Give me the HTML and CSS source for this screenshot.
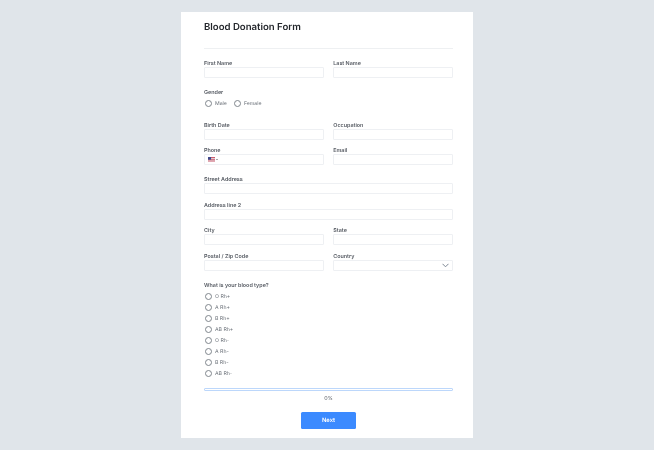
FILE: index.html
```html
<!DOCTYPE html>
<html lang="en">
<head>
  <meta charset="UTF-8" />
  <title>Blood Donation Form</title>
  <link rel="stylesheet" href="styles.css">
</head>
<body>
  <form class="card">
    <h1>Blood Donation Form</h1>

    <div class="row row-first">
      <div class="field"><label>First Name</label><div class="input"></div></div>
      <div class="field"><label>Last Name</label><div class="input"></div></div>
    </div>

    <div class="gender">
      <label>Gender</label>
      <div class="radio-inline">
        <span class="radio"><i></i>Male</span>
        <span class="radio"><i></i>Female</span>
      </div>
    </div>

    <div class="row row-birth">
      <div class="field"><label>Birth Date</label><div class="input"></div></div>
      <div class="field"><label>Occupation</label><div class="input"></div></div>
    </div>

    <div class="row row-phone">
      <div class="field">
        <label>Phone</label>
        <div class="input input-phone">
          <svg class="flag" width="7" height="4.5" viewBox="0 0 8 5">
            <rect width="8" height="5" fill="#e9e9ee"/>
            <rect width="8" height="1" fill="#c8475a"/>
            <rect y="2" width="8" height="1" fill="#c8475a"/>
            <rect y="4" width="8" height="1" fill="#c8475a"/>
            <rect width="3.5" height="3" fill="#3c4a8c"/>
          </svg>
          <span class="caret"></span>
        </div>
      </div>
      <div class="field"><label>Email</label><div class="input"></div></div>
    </div>

    <div class="field street"><label>Street Address</label><div class="input"></div></div>
    <div class="field line2"><label>Address line 2</label><div class="input"></div></div>

    <div class="row city">
      <div class="field"><label>City</label><div class="input"></div></div>
      <div class="field"><label>State</label><div class="input"></div></div>
    </div>

    <div class="row line2">
      <div class="field"><label>Postal / Zip Code</label><div class="input"></div></div>
      <div class="field">
        <label>Country</label>
        <div class="input input-select">
          <svg width="7" height="5" viewBox="0 0 7 5"><path d="M0.5 0.8 L3.5 3.8 L6.5 0.8" fill="none" stroke="#7d8794" stroke-width="1"/></svg>
        </div>
      </div>
    </div>

    <div class="blood">
      <label>What is your blood type?</label>
      <div class="radio-list">
        <span class="radio"><i></i>O Rh+</span>
        <span class="radio"><i></i>A Rh+</span>
        <span class="radio"><i></i>B Rh+</span>
        <span class="radio"><i></i>AB Rh+</span>
        <span class="radio"><i></i>O Rh-</span>
        <span class="radio"><i></i>A Rh-</span>
        <span class="radio"><i></i>B Rh-</span>
        <span class="radio"><i></i>AB Rh-</span>
      </div>
    </div>

    <div class="progress"></div>
    <div class="percent">0%</div>

    <div class="actions"><button type="button">Next</button></div>
  </form>
</body>
</html>
```

FILE: styles.css
```css
body {
  margin: 0;
  height: 450px;
  overflow: hidden;
  background-color: #e0e5ea;
  font-family: "Inter", "Liberation Sans", sans-serif;
  color: #565b63;
  text-rendering: geometricPrecision;
}

.card {
  width: 249px;
  height: 426px;
  margin: 12px 0 0 181px;
  padding: 0 20px 0 23px;
  background: #fff;
  will-change: transform;
}

h1 {
  margin: 0;
  height: 36px;
  padding-top: 7.5px;
  box-sizing: border-box;
  font-size: 9.6px;
  line-height: 15px;
  font-weight: 600;
  color: #23262b;
}

label {
  display: block;
  height: 8px;
  font-size: 5.4px;
  line-height: 10px;
  font-weight: 600;
}

.row {
  display: grid;
  grid-template-columns: 1fr 1fr;
  column-gap: 9.5px;
}

.row-first {
  border-top: 1px solid #eef0f2;
  padding-top: 10px;
}

.input {
  box-sizing: border-box;
  height: 11px;
  border: 1px solid #eef0f3;
  border-radius: 1px;
  background: #fff;
}

.input-phone {
  display: flex;
  align-items: center;
  padding-left: 2px;
}

.input-select {
  display: flex;
  align-items: center;
  justify-content: flex-end;
  padding-right: 3px;
}

.flag {
  margin-left: 0.5px;
}

.caret {
  margin-left: 1.5px;
  border-left: 1px solid transparent;
  border-right: 1px solid transparent;
  border-top: 1.5px solid #555;
}

.gender {
  margin-top: 10px;
}

.radio-inline {
  display: flex;
  gap: 6px;
  margin-top: 1.5px;
  height: 12px;
}

.radio {
  box-sizing: border-box;
  display: flex;
  align-items: center;
  height: 11px;
  padding-top: 2px;
  font-size: 5.2px;
  color: #6a7078;
}

.radio i {
  box-sizing: border-box;
  width: 7px;
  height: 7px;
  margin: 0 3px 2px 1px;
  border: 0.8px solid #80868d;
  border-radius: 50%;
}

.row-birth {
  margin-top: 11.5px;
}

.row-phone {
  margin-top: 6px;
}

.street {
  margin-top: 10px;
}

.line2 {
  margin-top: 7px;
}

.city {
  margin-top: 6px;
}

.blood {
  margin-top: 10px;
}

.radio-list {
  display: flex;
  flex-direction: column;
  margin-top: 1.5px;
}

.progress {
  box-sizing: border-box;
  height: 3px;
  margin-top: 9px;
  border: 1px solid #bcd7fb;
  border-radius: 1px;
}

.percent {
  margin-top: 4px;
  text-align: center;
  font-size: 5.4px;
  line-height: 8px;
}

.actions {
  display: flex;
  justify-content: center;
  margin-top: 9.5px;
}

button {
  width: 55px;
  height: 16.5px;
  padding: 1px 0 0;
  border: 0;
  border-radius: 1.5px;
  background-color: #3b8aff;
  color: #fff;
  font-family: inherit;
  font-size: 5.8px;
  font-weight: 600;
  text-rendering: inherit;
}
```
